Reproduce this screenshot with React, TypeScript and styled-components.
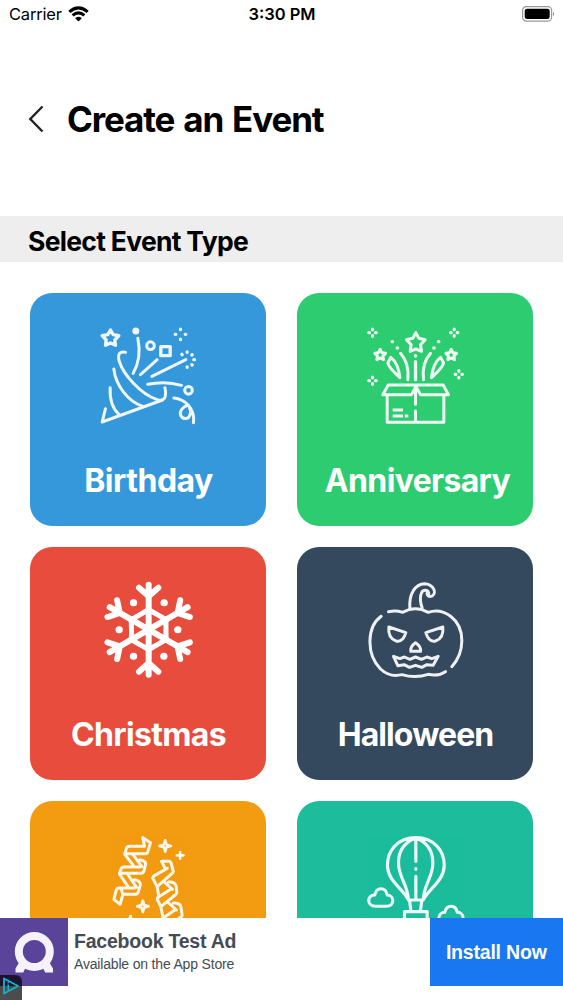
import React from 'react';
import styled, { createGlobalStyle } from 'styled-components';

const GlobalStyle = createGlobalStyle`
  html, body { margin: 0; padding: 0; background: #fff; overflow: hidden; }
  * { box-sizing: border-box; }
`;

const Screen = styled.div`
  position: relative;
  display: flex;
  flex-direction: column;
  width: 563px;
  height: 1000px;
  overflow: hidden;
  background: #fff;
  color: #000;
  font-family: Inter, "Liberation Sans", sans-serif;
`;

const StatusBar = styled.div`
  display: grid;
  grid-template-columns: 1fr auto 1fr;
  align-items: center;
  height: 28px;
  flex: none;
  padding: 0 8px 0 9px;
`;

const Carrier = styled.div`
  display: flex;
  align-items: center;
  gap: 6px;
  font-size: 16.5px;
  line-height: 28px;
  letter-spacing: -0.2px;
  svg { display: block; }
`;

const Clock = styled.div`
  font-size: 16.5px;
  font-weight: 600;
  line-height: 28px;
  letter-spacing: 0;
`;

const Battery = styled.svg`
  display: block;
  justify-self: end;
`;

const Header = styled.header`
  display: flex;
  align-items: center;
  gap: 22px;
  height: 188px;
  flex: none;
  padding: 0 0 6px 28px;
  svg { display: block; }
`;

const Title = styled.h1`
  margin: 0;
  font-size: 35px;
  font-weight: 700;
  line-height: 44px;
  letter-spacing: -1.15px;
  word-spacing: 1.9px;
  white-space: nowrap;
`;

const SectionBar = styled.h2`
  display: flex;
  align-items: center;
  flex: none;
  height: 46px;
  margin: 0 0 1px;
  padding: 3px 0 0 28px;
  background: #eeeeee;
  font-size: 26.5px;
  font-weight: 650;
  letter-spacing: -0.7px;
`;

const Grid = styled.main`
  display: grid;
  grid-template-columns: 236px 236px;
  grid-auto-rows: 233px;
  gap: 21px 31.5px;
  flex: 1;
  min-height: 0;
  overflow: hidden;
  padding: 30px 0 0 29.5px;
`;

const Card = styled.div<{ $color: string }>`
  display: flex;
  flex-direction: column;
  align-items: center;
  padding-top: 22px;
  border-radius: 22px;
  background: ${(p) => p.$color};
  overflow: hidden;
`;

const Glyph = styled.svg`
  display: block;
  flex: none;
  width: 130px;
  height: 120px;
  fill: none;
  stroke: #fff;
  stroke-width: 9px;
  stroke-linecap: round;
  stroke-linejoin: round;
`;

const Soft = styled.g`
  opacity: 0.92;
`;

const Label = styled.div<{ $spacing: number; $shift: number }>`
  margin-top: 26px;
  padding-left: ${(p) => p.$shift}px;
  color: #fff;
  font-size: 32px;
  font-weight: 700;
  line-height: 40px;
  letter-spacing: ${(p) => p.$spacing}px;
  white-space: nowrap;
`;

const AdBanner = styled.footer`
  position: relative;
  display: flex;
  align-items: flex-start;
  flex: none;
  height: 82px;
  background: #fff;
  font-family: "Liberation Sans", sans-serif;
`;

const AdLogo = styled.svg`
  display: block;
  flex: none;
  background: #5a4499;
`;

const AdCopy = styled.div`
  flex: 1;
  padding: 12px 0 0 6px;
  color: #444b54;
`;

const AdTitle = styled.div`
  font-size: 19.5px;
  font-weight: 700;
  line-height: 23px;
  letter-spacing: -0.22px;
`;

const AdSubtitle = styled.div`
  font-size: 14px;
  line-height: 18px;
  margin-top: 2px;
  letter-spacing: -0.18px;
`;

const InstallButton = styled.button`
  flex: none;
  width: 133.5px;
  height: 68px;
  border: 0;
  padding: 0;
  background: #1977f2;
  color: #fff;
  font: 700 19.5px "Liberation Sans", sans-serif;
  letter-spacing: -0.2px;
`;

const AdChoices = styled.svg`
  position: absolute;
  left: 0;
  bottom: 0;
`;

const Diamond = ({ x, y, r = 12 }: { x: number; y: number; r?: number }) => (
  <path
    strokeWidth="9.5"
    d={`M${x} ${y - r}v2M${x} ${y + r - 2}v2M${x - r} ${y}h2M${x + r - 2} ${y}h2`}
  />
);

const Party = () => (
  <Glyph viewBox="-6.5 0 390 360">
    <Soft>
      <path d="M76 45l8 14 17 3-12 13 2 16-15-7-15 7 2-16-12-13 17-3z" strokeWidth="10" />
      <circle cx="152" cy="48" r="6" fill="#fff" />
      <circle cx="196" cy="92" r="11.5" />
      <path d="M227 95h28v27h-28z" strokeWidth="10" />
      <Diamond x={286} y={58} r={16} />
      <path d="M158 70C166 108 161 145 144 175M216 134L166 179M302 134L200 184M188 208Q240 197 289 211" />
      <path d="M290 118l1 1M306 111v1M321 119l-1 1M326 134h2M320 149l1 1M306 156v1" strokeWidth="10" />
      <path d="M121 112C103 108 97 118 102 138C114 178 166 238 216 254C235 261 245 249 240 222L239 218" />
      <path d="M86 162C91 210 128 259 173 274M75 218C73 255 82 281 102 299M61 281L51 321L232 255" />
      <circle cx="310" cy="226" r="11.5" />
      <path d="M266 249Q292 252 309 270Q329 293 325 323M309 270C293 276 283 287 286 299C290 315 311 314 315 298Q318 287 312 275" />
    </Soft>
  </Glyph>
);

const GiftBox = () => (
  <Glyph viewBox="1.5 0 390 360">
    <Soft>
      <path d="M199 53l9 17 19 4-14 15 3 20-17-7-17 7 3-20-14-15 19-4z" />
      <path d="M92 103l5 10 11 2-8 8 2 11-10-5-10 5 2-11-8-8 11-2zM305 103l5 10 11 2-8 8 2 11-10-5-10 5 2-11-8-8 11-2z" />
      <Diamond x={69} y={53} r={11} />
      <Diamond x={314} y={53} r={11} />
      <Diamond x={69} y={197} r={11} />
      <Diamond x={328} y={178} r={11} />
      <path d="M128 80h1M143 99h1M267 80h1M253 99h1M198 122v1M198 140v54" strokeWidth="10" />
      <path d="M153 115Q180 145 175 194M243 115Q216 145 222 194" />
      <path d="M124 127Q147 145 151 188Q115 154 115 143ZM273 127Q250 145 246 188Q282 154 282 143Z" />
      <path d="M116 210H281L297 239H213L199 214L186 239H100ZM113 242V322H283V242M198 222V268M198 288V320" />
      <path d="M134 285h22M134 303h22M170 303h2" strokeLinecap="square" />
    </Soft>
  </Glyph>
);

const Snowflake = () => (
  <Glyph viewBox="-6 -3 390 360">
    {[0, 60, 120, 180, 240, 300].map((a) => (
      <g key={a} transform={`rotate(${a} 191 179)`}>
        <path d="M191 179V44M162 53L191 79L220 53" strokeWidth="18" />
        <path d="M138 149L191 120L245 149" strokeWidth="14" />
      </g>
    ))}
    <path
      d="M145 98h1M237 98h1M102 179h1M278 179h1M145 259h1M236 259h1"
      strokeWidth="21"
    />
  </Glyph>
);

const Pumpkin = () => (
  <Glyph viewBox="1.5 -3 390 360">
    <Soft>
      <path d="M117 125Q139 120 160 127Q197 105 236 127C281 111 337 146 337 212Q337 256 307 290M95 139C52 170 49 253 93 297Q121 323 157 314Q199 326 236 313Q266 320 288 305" />
      <path d="M181 115C178 70 198 42 225 41C252 42 263 69 248 78C235 84 228 69 236 65M218 114C208 86 213 60 228 61Q237 62 238 72" />
      <path d="M118 171L169 188C163 208 152 216 140 213C124 208 116 192 118 171ZM280 171L229 188C235 208 246 216 258 213C274 208 282 192 280 171Z" />
      <path d="M198 218Q181 230 184 244H213Q216 230 198 218Z" />
      <path d="M132 259L151 266L165 261L181 268L198 261L216 268L232 261L247 266L266 259L251 286L232 284L217 292L198 286L180 292L164 284L145 287Z" />
    </Soft>
  </Glyph>
);

const Streamers = () => (
  <Glyph viewBox="-6.5 39 390 360">
    <Soft>
      <path d="M178 109H133Q126 109 124 115L119 131H180Q186 131 188 125L196 98L173 83L178 109M119 133L147 170M143 133L170 170M164 149Q184 153 181 165L176 184Q174 190 168 190H103L108 176Q110 171 117 171H164M103 192L130 232M127 192L154 232M148 209Q168 213 165 226L159 247Q157 253 151 253H113L105 283L86 268L93 241Q95 234 103 234H148M108 236L113 253" />
      <path d="M229 154H252Q256 154 258 160L264 183Q265 188 260 191L216 230L203 205Q202 200 208 197L246 175M229 154L241 177M216 230L221 261M236 215L262 238M250 216Q270 214 273 229L275 247Q275 251 270 255L227 290L217 270Q215 264 220 261L259 236M227 290L233 321M247 276L274 300M264 279Q286 277 288 294L291 317L249 354L230 327L269 300" />
      <path d="M240 91L244 104L257 108L244 112L240 125L236 112L223 108L236 104ZM173 272L177 285L190 289L177 293L173 306L169 293L156 289L169 285ZM136 318L140 331L153 335L140 339L136 352L132 339L119 335L132 331ZM285 126v20M275 136h20" strokeWidth="8" />
    </Soft>
  </Glyph>
);

const Balloon = () => (
  <Glyph viewBox="1.5 39 390 360">
    <Soft>
      <path d="M199 83C145 83 112 122 114 169C116 214 159 235 177 270H221C239 235 282 214 284 169C286 122 253 83 199 83ZM177 270C174 219 147 204 147 158Q147 104 199 83Q250 104 250 158C250 204 224 219 221 270M199 85V154M199 176v2M199 199V267M180 270L184 301M217 270L213 301M165 305H233V349H165Z" strokeWidth="9.5" />
      <path d="M79 289C49 289 53 254 76 255C80 230 109 230 113 255C136 256 136 289 111 289ZM285 339C261 339 264 307 286 307C291 283 319 283 323 307C346 307 348 339 322 339Z" />
    </Soft>
  </Glyph>
);

type EventType = {
  id: string;
  color: string;
  icon: React.ReactNode;
  name?: string;
  spacing?: number;
  shift?: number;
};

const events: EventType[] = [
  { id: 'birthday', name: 'Birthday', color: '#3598db', icon: <Party />, spacing: -0.5, shift: 2 },
  { id: 'anniversary', name: 'Anniversary', color: '#2ecc70', icon: <GiftBox />, spacing: -0.65, shift: 5 },
  { id: 'christmas', name: 'Christmas', color: '#e84c3d', icon: <Snowflake />, spacing: -0.65, shift: 2 },
  { id: 'halloween', name: 'Halloween', color: '#34495e', icon: <Pumpkin />, spacing: -0.9, shift: 1 },
  { id: 'streamers', color: '#f39c11', icon: <Streamers /> },
  { id: 'balloon', color: '#1cbc9c', icon: <Balloon /> },
];

export default function App() {
  return (
    <Screen>
      <GlobalStyle />
      <StatusBar>
        <Carrier>
          Carrier
          <svg width="21" height="16" viewBox="0 0 21 16" fill="none" stroke="#000" strokeWidth="3">
            <path d="M1.3 5.9Q10.5-2.2 19.7 5.9M4.6 9.4Q10.5 4.3 16.4 9.4" />
            <path d="M7.2 12.2Q10.5 9.5 13.8 12.2L10.5 15.5Z" fill="#000" stroke="none" />
          </svg>
        </Carrier>
        <Clock>3:30 PM</Clock>
        <Battery width="33" height="16" viewBox="0 0 33 16">
          <rect x="0.6" y="0.6" width="29" height="14.6" rx="4" fill="none" stroke="#999" strokeWidth="1.2" />
          <rect x="2.7" y="2.7" width="25" height="10.4" rx="2.4" />
          <path d="M31 5.5q2 2.4 0 4.8z" fill="#888" />
        </Battery>
      </StatusBar>

      <Header>
        <svg width="17" height="28" viewBox="0 0 17 28" fill="none" stroke="#222" strokeWidth="2.4">
          <path d="M14.5 1.5L2.3 14L14.5 26.5" />
        </svg>
        <Title>Create an Event</Title>
      </Header>

      <SectionBar>Select Event Type</SectionBar>

      <Grid>
        {events.map((e) => (
          <Card key={e.id} $color={e.color}>
            {e.icon}
            {e.name && (
              <Label $spacing={e.spacing ?? 0} $shift={e.shift ?? 0}>{e.name}</Label>
            )}
          </Card>
        ))}
      </Grid>

      <AdBanner>
        <AdLogo width="68" height="68" viewBox="0 0 68 68">
          <circle cx="34.3" cy="33.5" r="15.5" fill="none" stroke="#f5f2fa" strokeWidth="8" />
          <path d="M20 43L15.5 50.5V54.5H23.2L25.5 50H43L45.2 54.5H53V50.5L48.5 43L43 42.5Q34 49 25 42.5Z" fill="#f5f2fa" />
        </AdLogo>
        <AdCopy>
          <AdTitle>Facebook Test Ad</AdTitle>
          <AdSubtitle>Available on the App Store</AdSubtitle>
        </AdCopy>
        <InstallButton>Install Now</InstallButton>
        <AdChoices width="22" height="25" viewBox="0 0 22 25">
          <path d="M0 0H15Q22 0 22 7V25H0Z" fill="#000" fillOpacity="0.7" />
          <path d="M4 3.5L18 11L4 18.5Z" fill="none" stroke="#12b4cf" strokeWidth="1.8" strokeLinejoin="round" />
          <path d="M8.2 9.5V15M8.2 6.8v1.4" stroke="#12b4cf" strokeWidth="1.6" />
        </AdChoices>
      </AdBanner>
    </Screen>
  );
}
